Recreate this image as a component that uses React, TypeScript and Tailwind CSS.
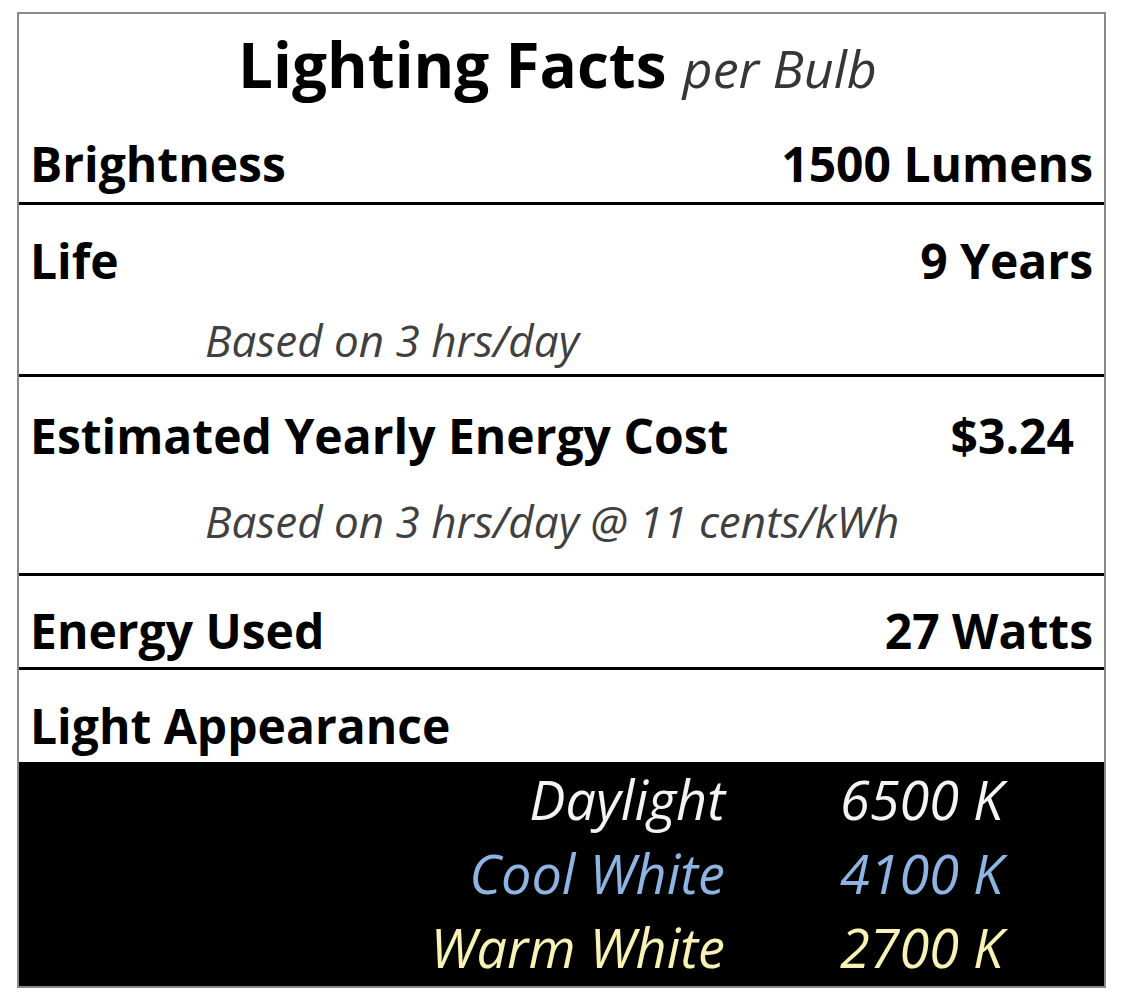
const font = { fontFamily: "'Open Sans', Lato, sans-serif" }

const appearance = [
  { name: "Daylight", temp: "6500 K", color: "text-[#f4f4f4]" },
  { name: "Cool White", temp: "4100 K", color: "text-[#8db4e2]" },
  { name: "Warm White", temp: "2700 K", color: "text-[#f8f2b4]" },
]

const App = () => {
  return (
    <div className="bg-white w-[1129px] h-[1000px] pt-[12px] pl-[17px]" style={font}>
      <div className="w-[1089px] border-2 border-[#8a8a8a] text-black">
        {/* title + brightness */}
        <div className="h-[191px] border-b-[3px] border-black flex flex-col">
          <div className="flex items-baseline justify-center gap-[16px] pt-[8px] pr-[8px]">
            <span className="text-[62px] font-bold leading-[84px]">Lighting Facts</span>
            <span className="text-[52px] italic text-[#363636] leading-none">per Bulb</span>
          </div>
          <div className="flex justify-between items-baseline px-[11px] mt-[28px]">
            <span className="text-[48px] font-bold leading-[60px]">Brightness</span>
            <span className="text-[48px] font-bold leading-[60px]">1500 Lumens</span>
          </div>
        </div>

        {/* life */}
        <div className="h-[172px] border-b-[3px] border-black flex flex-col">
          <div className="flex justify-between items-baseline px-[11px] pt-[26px]">
            <span className="text-[48px] font-bold leading-[60px]">Life</span>
            <span className="text-[48px] font-bold leading-[60px]">9 Years</span>
          </div>
          <div className="pl-[186px] mt-[24px] text-[44px] italic text-[#404040] leading-[50px]">
            Based on 3 hrs/day
          </div>
        </div>

        {/* cost */}
        <div className="h-[199px] border-b-[3px] border-black flex flex-col">
          <div className="flex justify-between items-baseline pl-[11px] pr-[30px] pt-[29px]">
            <span className="text-[48px] font-bold leading-[60px]">Estimated Yearly Energy Cost</span>
            <span className="text-[48px] font-bold leading-[60px]">$3.24</span>
          </div>
          <div className="pl-[186px] mt-[30px] text-[44px] italic text-[#404040] leading-[50px]">
            Based on 3 hrs/day @ 11 cents/kWh
          </div>
        </div>

        {/* energy */}
        <div className="h-[94px] border-b-[3px] border-black flex justify-between items-start px-[11px] pt-[25px]">
          <span className="text-[48px] font-bold leading-[60px]">Energy Used</span>
          <span className="text-[48px] font-bold leading-[60px]">27 Watts</span>
        </div>

        {/* appearance */}
        <div className="h-[92px] px-[11px] pt-[26px]">
          <div className="text-[48px] font-bold leading-[60px]">Light Appearance</div>
        </div>
        <div className="bg-black h-[224px] grid grid-cols-[706px_1fr] content-start">
          {appearance.map((a) => (
            <div key={a.name} className="contents">
              <span className={`text-right text-[54px] italic leading-[74px] ${a.color}`}>{a.name}</span>
              <span className={`pl-[115px] text-[54px] italic leading-[74px] ${a.color}`}>{a.temp}</span>
            </div>
          ))}
        </div>
      </div>
    </div>
  )
}

export default App
